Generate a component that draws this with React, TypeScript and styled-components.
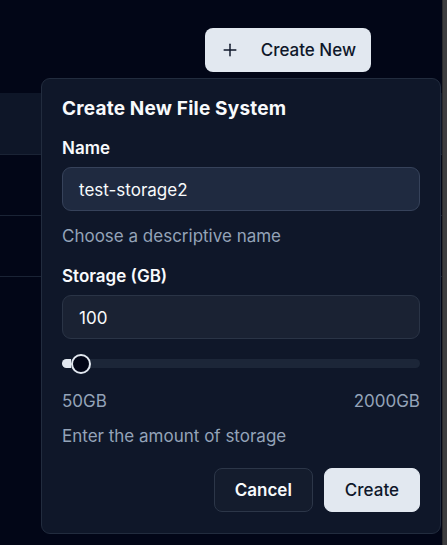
import React from "react";
import styled, { createGlobalStyle } from "styled-components";
import { Plus } from "lucide-react";

const Global = createGlobalStyle`
  html, body { margin: 0; padding: 0; background: #020617; }
  body { font-family: Inter, "Noto Sans", sans-serif; color: #f8fafc; }
  * { box-sizing: border-box; }
`;

const Shell = styled.div`
  display: flex;
  height: 545px;
  overflow: hidden;
`;

const Main = styled.div`
  position: relative;
  flex: 1;
  min-width: 0;
`;

const ScrollStrip = styled.div`
  width: 5px;
  background: #3d3d3f;
  border-left: 1px solid #2a2a2c;
`;

const Toolbar = styled.div`
  display: flex;
  justify-content: flex-end;
  padding: 28px 71px 0 0;
`;

const PrimaryButton = styled.button`
  display: flex;
  align-items: center;
  gap: 21px;
  height: 44px;
  padding: 0 15px 0 15px;
  border: none;
  border-radius: 8px;
  background: #e2e8f0;
  color: #0f172a;
  font-family: Inter, sans-serif;
  font-size: 17px;
  font-weight: 500;
`;

const Table = styled.div`
  margin-top: 21px;
  display: flex;
  flex-direction: column;
`;

const TableRow = styled.div<{ $head?: boolean }>`
  height: ${(p) => (p.$head ? 62 : 61)}px;
  background: ${(p) => (p.$head ? "#0e1628" : "transparent")};
  border-bottom: 1px solid #1a2335;
`;

const Popover = styled.div`
  position: absolute;
  top: 78px;
  left: 41px;
  width: 400px;
  background: #0f1729;
  border: 1px solid #222c3e;
  border-radius: 9px;
  padding: 16px 20px 21px;
  display: flex;
  flex-direction: column;
`;

const Title = styled.h2`
  margin: 0;
  font-size: 19px;
  line-height: 28px;
  font-weight: 700;
  letter-spacing: 0.2px;
  color: #f8fafc;
`;

const Label = styled.div<{ $mt: number }>`
  margin-top: ${(p) => p.$mt}px;
  font-size: 17px;
  line-height: 24px;
  font-weight: 600;
  color: #f8fafc;
`;

const Input = styled.div<{ $focus?: boolean }>`
  margin-top: 7px;
  height: 44px;
  display: flex;
  align-items: center;
  padding: 2px 16px 0;
  border-radius: 9px;
  border: 1px solid ${(p) => (p.$focus ? "#36425a" : "#2a3446")};
  background: ${(p) => (p.$focus ? "#1f2a40" : "#1a2233")};
  font-size: 17px;
  color: #f8fafc;
`;

const Muted = styled.div<{ $mt: number }>`
  margin-top: ${(p) => p.$mt}px;
  font-size: 17px;
  line-height: 24px;
  color: #94a3b8;
`;

const SliderRoot = styled.div`
  margin-top: 20px;
  position: relative;
  height: 9px;
  display: flex;
  align-items: center;
`;

const Track = styled.div`
  position: relative;
  width: 100%;
  height: 9px;
  border-radius: 999px;
  background: #1c2638;
  overflow: hidden;
`;

const Range = styled.div`
  position: absolute;
  left: 0;
  top: 0;
  bottom: 0;
  background: #e2e8f0;
`;

const Thumb = styled.div`
  position: absolute;
  top: 50%;
  width: 20px;
  height: 20px;
  border-radius: 50%;
  background: #020617;
  border: 2px solid #e2e8f0;
  transform: translate(-50%, -50%);
`;

const RangeLabels = styled.div`
  margin-top: 21px;
  display: flex;
  justify-content: space-between;
  font-size: 17px;
  line-height: 24px;
  color: #94a3b8;
`;

const Actions = styled.div`
  margin-top: 20px;
  display: flex;
  justify-content: flex-end;
  gap: 11px;
`;

const ActionButton = styled.button<{ $primary?: boolean }>`
  height: 44px;
  padding: 0 20px;
  border-radius: 8px;
  font-family: Inter, sans-serif;
  font-size: 17px;
  font-weight: ${(p) => (p.$primary ? 500 : 600)};
  border: 1px solid ${(p) => (p.$primary ? "#e2e8f0" : "#2c3648")};
  background: ${(p) => (p.$primary ? "#e2e8f0" : "#141c2d")};
  color: ${(p) => (p.$primary ? "#0f172a" : "#f8fafc")};
`;

const MIN = 50;
const MAX = 2000;
const VALUE = 100;

export default function App() {
  const pct = ((VALUE - MIN) / (MAX - MIN)) * 100;
  const offset = 10 - (pct / 50) * 10;
  return (
    <>
      <Global />
      <Shell>
        <Main>
          <Toolbar>
            <PrimaryButton>
              <Plus size={20} strokeWidth={1.75} />
              Create New
            </PrimaryButton>
          </Toolbar>
          <Table>
            <TableRow $head />
            <TableRow />
            <TableRow />
          </Table>
          <Popover>
            <Title>Create New File System</Title>
            <Label $mt={13}>Name</Label>
            <Input $focus>test-storage2</Input>
            <Muted $mt={13}>Choose a descriptive name</Muted>
            <Label $mt={16}>Storage (GB)</Label>
            <Input>100</Input>
            <SliderRoot>
              <Track>
                <Range style={{ width: `${pct}%` }} />
              </Track>
              <Thumb style={{ left: `calc(${pct}% + ${offset}px)` }} />
            </SliderRoot>
            <RangeLabels>
              <span>50GB</span>
              <span>2000GB</span>
            </RangeLabels>
            <Muted $mt={11}>Enter the amount of storage</Muted>
            <Actions>
              <ActionButton>Cancel</ActionButton>
              <ActionButton $primary>Create</ActionButton>
            </Actions>
          </Popover>
        </Main>
        <ScrollStrip />
      </Shell>
    </>
  );
}
